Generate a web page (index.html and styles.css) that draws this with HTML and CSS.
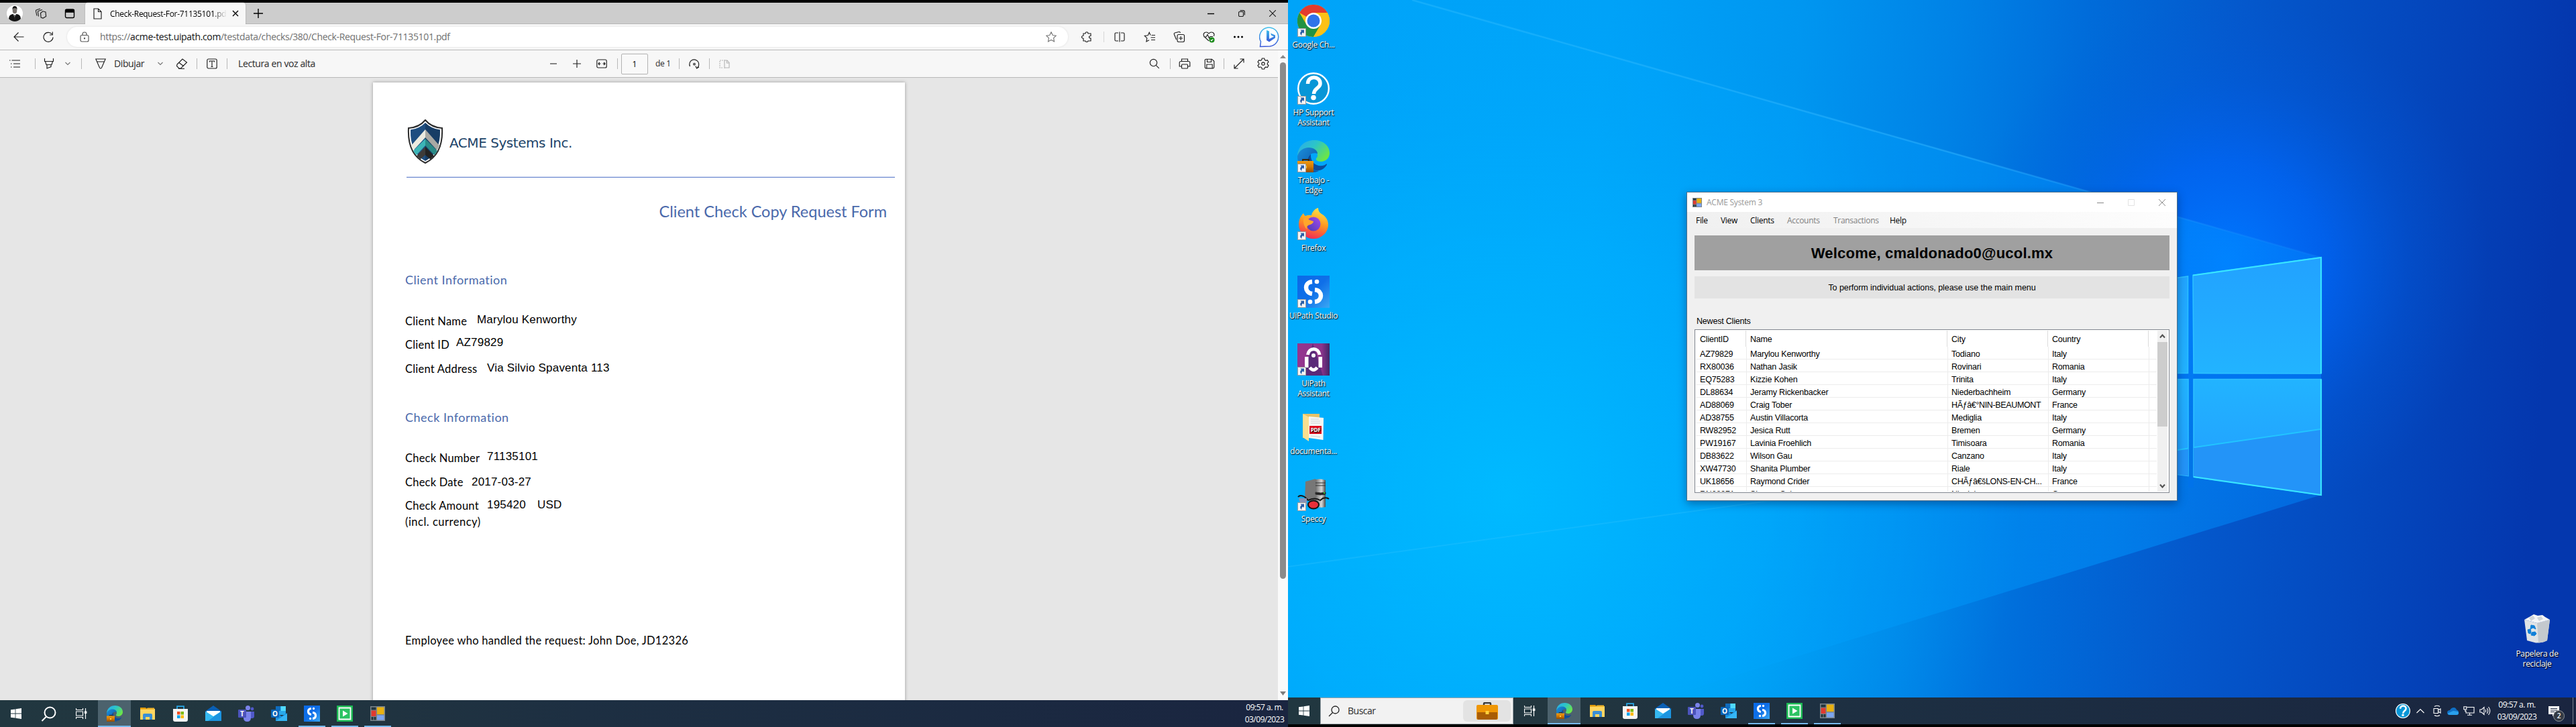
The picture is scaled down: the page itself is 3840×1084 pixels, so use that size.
FILE: index.html
```html
<!DOCTYPE html>
<html lang="es">
<head>
<meta charset="utf-8">
<title>Escritorio</title>
<link rel="stylesheet" href="styles.css">
</head>
<body>
<svg class="defs" aria-hidden="true">
  <defs>
    <linearGradient id="gEdgeTop" x1="0" y1="0" x2="1" y2=".6"><stop offset="0" stop-color="#2aa8f0"/><stop offset=".5" stop-color="#2cc5c8"/><stop offset="1" stop-color="#6be548"/></linearGradient>
    <linearGradient id="gEdgeMid" x1="0" y1="0" x2="1" y2="1"><stop offset="0" stop-color="#1b8fdc"/><stop offset="1" stop-color="#0a4fa0"/></linearGradient>
    <linearGradient id="gCase" x1="0" y1="0" x2="0" y2="1"><stop offset="0" stop-color="#f09a10"/><stop offset=".5" stop-color="#d47a04"/><stop offset="1" stop-color="#8f4a02"/></linearGradient>
    <linearGradient id="gStudio" x1="0" y1="0" x2="1" y2="1"><stop offset="0" stop-color="#0a6ae8"/><stop offset=".5" stop-color="#0f6fe8"/><stop offset="1" stop-color="#3aa8f4"/></linearGradient>
    <linearGradient id="gFox" x1=".6" y1="0" x2=".3" y2="1"><stop offset="0" stop-color="#ffe14a"/><stop offset=".45" stop-color="#ff9a1f"/><stop offset="1" stop-color="#f0245a"/></linearGradient>
    <linearGradient id="gPurple" x1="0" y1="1" x2="1" y2="0"><stop offset="0" stop-color="#4a3ab0"/><stop offset="1" stop-color="#a44af0"/></linearGradient>
    <linearGradient id="gAssist" x1="0" y1="0" x2="1" y2="0"><stop offset="0" stop-color="#95358f"/><stop offset=".75" stop-color="#8c348c"/><stop offset="1" stop-color="#3f2766"/></linearGradient>
    <linearGradient id="gTower" x1="0" y1="0" x2="1" y2="0"><stop offset="0" stop-color="#6d6d6d"/><stop offset=".6" stop-color="#d8d8d8"/><stop offset="1" stop-color="#4a4a4a"/></linearGradient>
    <linearGradient id="gBing" x1="0" y1="0" x2="0" y2="1"><stop offset="0" stop-color="#3fc0ec"/><stop offset="1" stop-color="#3a58d8"/></linearGradient>
    <symbol id="edge" viewBox="0 0 48 48">
      <path d="M0 23C1 9 11 0 25 0c13 0 23 8 23 19 0 8-6 13-13 13-6 0-8-3-7-5 2-2 2-3 2-5 0-5-5-9-12-9C9 13 3 17 0 23z" fill="url(#gEdgeTop)"/>
      <path d="M0 24c2-8 9-13 17-13 7 0 13 4 13 9-8-3-16 3-15 12 1 8 8 14 17 14-3 1-6 2-9 2C10 48 0 38 0 24z" fill="url(#gEdgeMid)"/>
      <path d="M20 21c-8 6-7 20 7 24 3 1 8 0 11-2 3-2 6-6 6-7 0-1-2 0-3 1-10 4-22-2-21-16z" fill="#0d4c9c"/>
      <path d="M8 31v-2h9v2" fill="none" stroke="#38260f" stroke-width="2"/>
      <rect y="31" width="24" height="17" fill="url(#gCase)"/><rect x="10" y="38" width="4" height="4" fill="#ffce3c"/>
    </symbol>
    <symbol id="win" viewBox="0 0 16 16"><path d="M0 2.3 6.6 1.4v6.2H0zM7.4 1.3 16 0v7.6H7.4zM0 8.4h6.6v6.2L0 13.7zM7.4 8.4H16V16l-8.6-1.2z" fill="#fff"/></symbol>
    <symbol id="tasks" viewBox="0 0 17 16"><path d="M.5 0v2.5h10V0M.5 16v-2.5h10V16M.5 5h10v6H.5zM14.500 0v16" fill="none" stroke="#fff" stroke-width="1.2"/><rect x="12.800" y="4.500" width="3.600" height="3.400" fill="#fff"/></symbol>
    <symbol id="folder" viewBox="0 0 24 24"><path d="M1 3h8l2 2H1z" fill="#e09a08"/><path d="M1 5h22v16H1z" fill="#ffd661"/><path d="M1 5h9l2-1.500h10V6H1z" fill="#f0b429"/><path d="M5 21v-7q0-2 2-2h10q2 0 2 2v7h-4v-4H9v4z" fill="#3a8fd6"/></symbol>
    <symbol id="store" viewBox="0 0 24 24"><path d="M7 6V1.200h10V6" fill="none" stroke="#2aa9e8" stroke-width="1.700"/><path d="M1 5h22v16q0 3-3 3H4q-3 0-3-3z" fill="#f5f5f5"/><path d="M7 9h4.500v4.500H7z" fill="#f25022"/><path d="M12.500 9H17v4.500h-4.500z" fill="#7fba00"/><path d="M7 14.500h4.500V19H7z" fill="#00a4ef"/><path d="M12.500 14.500H17V19h-4.500z" fill="#ffb900"/></symbol>
    <symbol id="mail" viewBox="0 0 24 24"><path d="M0 8.500 12 0l12 8.500V10H0z" fill="#0a5fb4"/><path d="M2 8h20v8H2z" fill="#fff"/><path d="M0 8.500 12 16l12-7.500V23H0z" fill="#35b8f1"/><path d="M24 8.500V23H4z" fill="#1c94e0"/></symbol>
    <symbol id="teams" viewBox="0 0 24 24"><circle cx="14.500" cy="3.500" r="3.500" fill="#7b83eb"/><circle cx="21" cy="5" r="2.400" fill="#5059c9"/><path d="M17 9h7v7q0 3-3 3h-4z" fill="#5059c9"/><path d="M9 9h10v9q0 6-5.500 6T8 18z" fill="#7b83eb"/><rect y="6" width="12" height="12" rx="1" fill="#4b53bc"/><text x="6" y="15.500" text-anchor="middle" class="glyph g9">T</text></symbol>
    <symbol id="outlook" viewBox="0 0 24 24"><path d="M7 1h15v13H7z" fill="#28a8ea"/><path d="M7 1h7.500v7H7z" fill="#0f6cbd"/><path d="M14.500 1H22v7h-7.500z" fill="#50d9ff"/><path d="M7 11l9 5 8-5v12H7z" fill="#1a90e0"/><path d="M7 23 24 12v11z" fill="#35b5f5"/><rect y="6" width="12" height="12" rx="1" fill="#0a64b8"/><text x="6" y="15.500" text-anchor="middle" class="glyph g9">O</text></symbol>
    <symbol id="studio" viewBox="0 0 48 48"><path d="M0 0h48v48H0z" fill="url(#gStudio)"/><path d="M22 9C10 10 10 25 22 27M26 21c12 1 12 17 0 18" fill="none" stroke="#fff" stroke-width="6.500"/><circle cx="29" cy="9" r="3.300" fill="#fff"/><circle cx="19" cy="39" r="3.300" fill="#fff"/></symbol>
    <symbol id="player" viewBox="0 0 24 24"><path d="M0 0h24v24H0z" fill="#1db954"/><path d="M3.500 3.500h17v17h-17z" fill="#2cc363" stroke="#fff" stroke-width="1.800"/><path d="M9 7.500v9l7.500-4.500z" fill="#fff"/></symbol>
    <symbol id="forms" viewBox="0 0 22 22"><path d="M0 0h22v22H0z" fill="#7b858c"/><path d="M1.500 1.500h7v4h-7zM1.500 16h3v4.500h-3zM5.500 16h3v4.500h-3z" fill="#22343c"/><path d="M1.500 6.500h7V15h-7z" fill="#e03a30"/><path d="M10 1.500h10.500V12H10z" fill="#e8b010"/><path d="M10 13.500h10.500v7H10z" fill="#7ba4f0"/></symbol>
    <symbol id="help" viewBox="0 0 48 48"><circle cx="24" cy="24" r="22.800" fill="#0896d7" stroke="#fff" stroke-width="2.400"/><path d="M15.500 17c0-13 18.500-12 18.500-.500 0 7-9.500 7-9.500 15.500" fill="none" stroke="#fff" stroke-width="5.500"/><circle cx="24" cy="37.500" r="3.800" fill="#fff"/></symbol>
    <symbol id="shortcut" viewBox="0 0 13 13"><path d="M.5.5h12v12H.5z" fill="#f4f4f4" stroke="#9b9b9b"/><path d="M4.500 2.500h5.500V8L8.300 6.500C6.500 7.500 6 9 6.500 11 3.500 9 3.500 6.500 6 4.300z" fill="#2b5fa8"/></symbol>
    <symbol id="bag" viewBox="0 0 32 26"><path d="M11 5V2.500q0-1.500 1.500-1.500h7q1.500 0 1.500 1.500V5" fill="none" stroke="#3a3a3a" stroke-width="2.500"/><rect y="4" width="32" height="22" rx="2" fill="#ef9706"/><path d="M1 15h30v9q0 2-2 2H3q-2 0-2-2z" fill="#a85d05"/><rect x="13.500" y="13" width="5" height="5" fill="#ffd23c"/></symbol>
  </defs>
</svg>

<div class="screens">
  <section class="monitor left">
    <div class="tabstrip">
      <svg class="avatar" width="24" height="24" viewBox="0 0 24 24"><circle cx="12" cy="12" r="12" fill="#fff"/><path d="M3 20q0-6 6-7h6q6 1 6 7-4 4-9 4t-9-4z" fill="#151515"/><path d="M10 13h4l-2 6z" fill="#fff"/><path d="M11.500 14h1.200l.5 7h-2z" fill="#222"/><ellipse cx="12" cy="8" rx="3.300" ry="4.200" fill="#77716c"/><path d="M8.500 7q-.5-6 3.500-6t3.500 6q-.5-3-3.500-3T8.500 7z" fill="#111"/></svg>
      <svg class="m18 ln" width="18" height="16" viewBox="0 0 18 16"><path d="M3 11.500 1.500 4.500Q1.300 3 2.500 2.700L8 1M5.500 12.500 4.500 6Q4.400 4.600 5.500 4.300L11 2.500M8.500 7.500 12 4.800l4 1.200.6 6.500-4.500 2.500-3-1z"/></svg>
      <svg class="m26 ln bold" width="16" height="16" viewBox="0 0 16 16"><rect x="1.500" y="2" width="13" height="12.500" rx="2"/><path d="M2 3h12v3H2z" fill="#000"/></svg>
      <div class="tab">
        <svg class="ln" width="13" height="17" viewBox="0 0 13 17"><path d="M1 1h6.500L12 5.500V16H1zM7.500 1v4.500H12"/></svg>
        <span class="tabtitle">Check-Request-For-71135101.pdf</span>
        <svg class="ln bold" width="10" height="10" viewBox="0 0 10 10"><path d="m1 1 8 8M9 1 1 9"/></svg>
      </div>
      <svg class="m12 ln bold" width="14" height="14" viewBox="0 0 14 14"><path d="M7 0v14M0 7h14"/></svg>
      <div class="winctl">
        <svg class="ln bold" width="10" height="10" viewBox="0 0 10 10"><path d="M0 5.500h10"/></svg>
        <svg class="ln" width="10" height="10" viewBox="0 0 10 10"><rect x=".5" y="2.500" width="7" height="7" rx="1.500"/><path d="M2.500 .6H7Q9.400.6 9.400 3v4.500"/></svg>
        <svg class="ln" width="10" height="10" viewBox="0 0 10 10"><path d="m0 0 10 10M10 0 0 10"/></svg>
      </div>
    </div>

    <div class="addressrow">
      <svg class="ln" width="16" height="16" viewBox="0 0 16 16"><path d="M15.500 8H1M7.500 1.500 1 8l6.500 6.500"/></svg>
      <svg class="m28 ln" width="16" height="16" viewBox="0 0 16 16"><path d="M15 8.500A7 7 0 1 1 13.500 4M14.300.5V5H10"/></svg>
      <div class="omnibox">
        <svg class="ln dim" width="14" height="16" viewBox="0 0 14 16"><rect x="1" y="5.500" width="12" height="9.500" rx="2"/><path d="M4 5.500V4a3 3 0 0 1 6 0v1.500"/><circle cx="7" cy="10.200" r=".6" fill="#555"/></svg>
        <span class="url">https://<b>acme-test.uipath.com</b>/testdata/checks/380/Check-Request-For-71135101.pdf</span>
        <svg class="push ln dim2" width="16" height="16" viewBox="0 0 16 16"><path d="m8 .8 2.200 4.700 5 .7-3.600 3.500.9 5.200L8 12.400l-4.500 2.500.9-5.200L.8 6.200l5-.7z"/></svg>
      </div>
      <svg class="m20 ln" width="16" height="16" viewBox="0 0 16 16"><path d="M3 3h3q0-2.300 2-2.300T10 3h4v3.500q-2.500 0-2.500 1.700T14 10v4h-4q0 1.500-2 1.500T6 14H3v-3.800q-2.500 0-2.500-2T3 6.200z"/></svg>
      <i class="sep tall m17"></i>
      <svg class="m15 ln" width="16" height="16" viewBox="0 0 16 16"><path d="M6 2H2.500Q1 2 1 3.500v9Q1 14 2.500 14H6M10 2h3.500Q15 2 15 3.500v9q0 1.500-1.500 1.500H10M8 .5v15"/></svg>
      <svg class="m28 ln" width="18" height="16" viewBox="0 0 18 16"><path d="m10 5.500-1.800-4.200L6.200 5.700l-5 .7 3.600 3.500-.9 5L8 12.700M11.500 5.500H17M10.500 9H17M11 12.500h6"/></svg>
      <svg class="m26 ln" width="18" height="16" viewBox="0 0 18 16"><path d="M4.500 12 1.300 4Q.9 2.500 2.300 2l6-1.500Q10 .2 10.500 2"/><rect x="6" y="4.500" width="10.500" height="11" rx="2"/><path d="M11.200 7v6M8.200 10h6"/></svg>
      <svg class="m26 ln" width="18" height="17" viewBox="0 0 18 17"><path d="M9 14 2 7.500Q-.2 3.500 3 1.500 6.500 0 9 3q2.500-3 6-1.500 3.200 2 1.300 5.500M1.500 8H5l2-3.500L9.500 10l1.500-2.500h4"/><circle cx="13.500" cy="12.500" r="4" fill="#1a8a1a" stroke="none"/><path d="m11.800 12.500 1.200 1.300 2.200-2.500" stroke="#fff"/></svg>
      <svg class="m27" width="16" height="4" viewBox="0 0 16 4"><circle cx="2.500" cy="2" r="1.500"/><circle cx="8" cy="2" r="1.500"/><circle cx="13.500" cy="2" r="1.500"/></svg>
      <svg class="m23" width="32" height="32" viewBox="0 0 32 32"><path d="M1.500 30.500 2.500 23A14 14 0 1 1 16 30z" fill="#fff" stroke="url(#gBing)" stroke-width="1.500"/><path d="m11 6 4 1.500V19l7-3.500-4-2-1-3 7 3v4l-9 6-4-2.500z" fill="url(#gBing)"/></svg>
    </div>

    <div class="content">
      <div class="viewer">
        <div class="pdfbar">
          <svg class="ln" width="16" height="14" viewBox="0 0 16 14"><path d="M3.500 2H16M6 7h10M6 12h10M0 2h1.500M2 7h1.500M2 12h1.500"/></svg>
          <i class="sep m22"></i>
          <svg class="m12 ln" width="16" height="16" viewBox="0 0 16 16"><path d="M1.500 0v4.500h13V0M2.500 4.500l1.500 5h8l1.500-5M5 9.500V15l6-2.500v-3"/></svg>
          <svg class="m16 ln dim2" width="8" height="6" viewBox="0 0 8 6"><path d="m.5 1 3.500 3.500L7.500 1"/></svg>
          <i class="sep m16"></i>
          <svg class="m20 ln" width="16" height="16" viewBox="0 0 16 16"><path d="M.8 1h14.400L9.500 14Q8 16 6.500 14zM3 5h10"/></svg>
          <span class="m12 tooltext w45">Dibujar</span>
          <svg class="m20 ln dim2" width="8" height="6" viewBox="0 0 8 6"><path d="m.5 1 3.500 3.500L7.500 1"/></svg>
          <svg class="m19 ln" width="18" height="17" viewBox="0 0 18 17"><path d="m2 9 8-8 6.500 5-9 9H5L1.500 11.500zM5 6.500l6.500 5M4 15.500h9"/></svg>
          <i class="sep m13"></i>
          <svg class="m14 ln" width="16" height="16" viewBox="0 0 16 16"><rect x=".8" y="1" width="14.400" height="14" rx="2"/><path d="M4.500 5.500V4h7v1.500M8 4v8.500M6.500 12.500h3"/></svg>
          <i class="sep m14"></i>
          <span class="m16 tooltext w116">Lectura en voz alta</span>
          <svg class="zoomout ln mid" width="12" height="12" viewBox="0 0 12 12"><path d="M1 6h10" stroke-width="1.600"/></svg>
          <svg class="m23 ln" width="12" height="12" viewBox="0 0 12 12"><path d="M0 6h12M6 0v12"/></svg>
          <svg class="m23 ln" width="16" height="14" viewBox="0 0 16 14"><rect x=".8" y="1" width="14.400" height="12" rx="2"/><path d="M3 7h3.500M9.500 7H13M4.800 5 3 7l1.800 2M11.200 5 13 7l-1.800 2"/></svg>
          <i class="sep m15"></i>
          <span class="pagebox">1</span>
          <span class="m11 tooltext of">de 1</span>
          <i class="sep m12"></i>
          <svg class="m13 ln" width="18" height="17" viewBox="0 0 18 17"><path d="M2.500 12A7 7 0 1 1 13 14.500M16 13l-3.500 2L11 11.500"/><circle cx="9" cy="8.500" r="1.300"/></svg>
          <i class="sep m13"></i>
          <svg class="m14 ln pale" width="16" height="15" viewBox="0 0 16 15"><path d="M8 1v13" /><path d="M6 2H1v11h5" stroke-dasharray="2 1"/><path d="M8 2h4l3 3.500V13H8M11.500 2v4H15"/></svg>
          <div class="pdfright">
            <svg class="ln" width="16" height="16" viewBox="0 0 16 16"><circle cx="6.500" cy="6.500" r="5.200"/><path d="m10.300 10.300 4.500 4.500"/></svg>
            <i class="sep m15"></i>
            <svg class="m12 ln" width="18" height="16" viewBox="0 0 18 16"><path d="M4.500 4.500V1h9v3.500M4.500 12H1.200V6.500q0-2 2-2h11.600q2 0 2 2V12h-3.300"/><rect x="4.500" y="9" width="9" height="6" rx="1"/></svg>
            <svg class="m20 ln" width="16" height="16" viewBox="0 0 16 16"><path d="M1.200 3q0-1.800 1.800-1.800h8.500l3.300 3V13q0 1.800-1.800 1.800H3q-1.800 0-1.800-1.800zM4.500 1.200V5.500h6V1.200M3.800 14.800V9h8.400v5.800"/></svg>
            <i class="sep m13"></i>
            <svg class="m14 ln" width="16" height="16" viewBox="0 0 16 16"><path d="M1 15 15 1M9.500 1H15v5.500M6.500 15H1V9.500"/></svg>
            <svg class="m18 ln gear" width="20" height="18" viewBox="0 0 20 18"><circle cx="10" cy="9" r="2.200"/><path d="m8.300 1 3.400 0 .6 2.300 1.700 1L16.300 3.600 18 6.500 16.300 8.200v1.700L18 11.600l-1.700 2.900-2.300-.6-1.700 1L11.700 17H8.300l-.6-2.200-1.700-1-2.300.7L2 11.600l1.700-1.700V8.200L2 6.500l1.700-2.900 2.300.7 1.700-1z"/></svg>
          </div>
        </div>
        <div class="canvas">
          <article class="sheet">
            <header class="brand">
              <svg width="54" height="66" viewBox="0 0 54 66"><path d="M27 1q9 11 25 12 2 39-25 52Q0 52 2 13 18 12 27 1z" fill="#fff" stroke="#2c2c2c" stroke-width="2"/><path d="M27 5q9 9 22 10.500Q50 50 27 62z" fill="#173d66"/><path d="M27 5Q18 14 5 15.500 4 50 27 62z" fill="#1f4e80"/><path d="m27 15 21 24-3.500 7L27 27z" fill="#a9a9a4"/><path d="M27 15 6 39l3.500 7L27 27z" fill="#ecebe0"/><path d="m27 29 18 18-4.500 6.500L27 39z" fill="#2a8a86"/><path d="M27 29 9 47l4.500 6.500L27 39z" fill="#3cb5b6"/><path d="m27 41 13 13.500-5.500 5L27 53z" fill="#232323"/><path d="M27 41 14 54.500l5.500 5L27 53z" fill="#3d3b39"/></svg>
              <span class="company">ACME Systems Inc.</span>
            </header>
            <hr>
            <h1>Client Check Copy Request Form</h1>
            <h2 class="h-client">Client Information</h2>
            <p class="f f1"><span class="w107">Client Name</span><span class="v up2">Marylou Kenworthy</span></p>
            <p class="f f2"><span class="w76">Client ID</span><span class="v up3">AZ79829</span></p>
            <p class="f f3"><span class="w122">Client Address</span><span class="v up1">Via Silvio Spaventa 113</span></p>
            <h2 class="h-check">Check Information</h2>
            <p class="f f4"><span class="w122">Check Number</span><span class="v up2">71135101</span></p>
            <p class="f f3"><span class="w99">Check Date</span><span class="v">2017-03-27</span></p>
            <p class="f f2"><span class="w123">Check Amount</span><span class="v up1 w74">195420</span><span class="v up1">USD</span></p>
            <p class="f incl">(incl. currency)</p>
            <p class="f employee">Employee who handled the request: John Doe, JD12326</p>
          </article>
        </div>
      </div>
      <div class="scrollbar">
        <svg width="9" height="5" viewBox="0 0 9 5"><path d="M4.500 0 9 5H0z" fill="#8a8a8a"/></svg>
        <i class="thumb"></i>
        <svg class="down" width="9" height="6" viewBox="0 0 9 6"><path d="M0 0h9L4.500 6z" fill="#7d7d7d"/></svg>
      </div>
    </div>

    <footer class="taskbar">
      <span class="tb start"><svg width="16" height="16"><use href="#win"/></svg></span>
      <span class="tb"><svg class="find" width="23" height="23" viewBox="0 0 23 23"><circle cx="13.500" cy="9.500" r="8"/><path d="M8 15.500 1.500 22"/></svg></span>
      <span class="tb"><svg width="17" height="16"><use href="#tasks"/></svg></span>
      <span class="tb active"><svg width="24" height="24"><use href="#edge"/></svg></span>
      <span class="tb"><svg width="24" height="24"><use href="#folder"/></svg></span>
      <span class="tb"><svg width="24" height="24"><use href="#store"/></svg></span>
      <span class="tb"><svg width="24" height="24"><use href="#mail"/></svg></span>
      <span class="tb"><svg width="24" height="24"><use href="#teams"/></svg></span>
      <span class="tb"><svg width="24" height="24"><use href="#outlook"/></svg></span>
      <span class="tb open"><svg width="24" height="24"><use href="#studio"/></svg></span>
      <span class="tb open"><svg width="24" height="24"><use href="#player"/></svg></span>
      <span class="tb open"><svg width="22" height="22"><use href="#forms"/></svg></span>
      <div class="clock push"><span>09:57 a. m.</span><span>03/09/2023</span></div>
    </footer>
  </section>

  <section class="monitor right">
    <svg class="wallpaper" width="1920" height="1040" viewBox="0 0 1920 1040">
      <defs>
        <linearGradient id="base" x1="0" y1="0" x2="1" y2=".05"><stop offset="0" stop-color="#00a3f9"/><stop offset=".25" stop-color="#00a2f8"/><stop offset=".4" stop-color="#0096f0"/><stop offset=".52" stop-color="#0082e6"/><stop offset=".62" stop-color="#006cda"/><stop offset=".74" stop-color="#0458cc"/><stop offset=".87" stop-color="#0448be"/><stop offset="1" stop-color="#0437ae"/></linearGradient>
        <radialGradient id="warm" gradientUnits="userSpaceOnUse" cx="330" cy="740" r="760"><stop offset="0" stop-color="#00bcff"/><stop offset=".5" stop-color="#00b3ff" stop-opacity=".6"/><stop offset="1" stop-color="#00a4f8" stop-opacity="0"/></radialGradient>
        <radialGradient id="glow" gradientUnits="userSpaceOnUse" cx="1400" cy="390" r="390"><stop offset="0" stop-color="#0078ff"/><stop offset=".38" stop-color="#0068fb" stop-opacity=".7"/><stop offset=".7" stop-color="#0060ea" stop-opacity=".25"/><stop offset="1" stop-color="#0058dc" stop-opacity="0"/></radialGradient>
        <linearGradient id="cone" x1="0" y1="0" x2="1" y2="0"><stop offset="0" stop-color="#00b4ff" stop-opacity=".05"/><stop offset=".5" stop-color="#00a4ff" stop-opacity=".3"/><stop offset=".8" stop-color="#0098ff" stop-opacity=".5"/><stop offset="1" stop-color="#0088ff" stop-opacity=".45"/></linearGradient>
        <linearGradient id="pane" x1="0" y1="0" x2="0" y2="1"><stop offset="0" stop-color="#22a2ff"/><stop offset=".5" stop-color="#22b4ff"/><stop offset="1" stop-color="#229cff"/></linearGradient>
        <linearGradient id="beam" x1="0" y1="0" x2="1" y2="0"><stop offset="0" stop-color="#40c4ff" stop-opacity=".3"/><stop offset=".6" stop-color="#30b4ff" stop-opacity=".5"/><stop offset="1" stop-color="#2090ff" stop-opacity=".15"/></linearGradient>
      </defs>
      <path d="M0 0h1920v1040H0z" fill="url(#base)"/>
      <path d="M0 0h1920v1040H0z" fill="url(#warm)"/>
      <path d="M0 0h1920v1040H0z" fill="url(#glow)"/>
      <path d="M185 0 1540 384V738L560 1040H0V0z" fill="url(#cone)"/>
      <path d="M185 0 1540 384" stroke="url(#beam)" stroke-width="2.500"/>
      <path d="M0 845 730 745" stroke="#3cc8ff" stroke-opacity=".25" stroke-width="2"/>
      <path d="M1170 423 1342 411v316h8V411l190-27v354l-190-27h-8l-172-20z" fill="#0072ee" fill-opacity=".5"/>
      <g stroke="#2cc0ff" stroke-width="1.600" fill="url(#pane)">
        <path d="M1170 436 1341.500 412v144.500H1170zM1170 565.500h172V709.500L1170 687zM1349 410.500 1540 384v173l-190-.5zM1350 565.500h190V738l-190-27z"/>
      </g>
      <path d="M1350 668 1540 640V738l-190-27zM1326 671l16-2.500v41l-16-2z" fill="#2394f8"/>
      <path d="m1351 667 188-27M1326 671l16-2.500" stroke="#22c4ff" stroke-width="2"/>
      <path d="M1349 410.500 1540 384v173M1540 565.500V738l-190-27" fill="none" stroke="#38e4ff" stroke-width="2.200"/>
    </svg>

    <div class="desktop">
      <nav class="shortcuts">
        <div class="icon"><div class="pic"><svg width="48" height="48" viewBox="0 0 48 48"><circle cx="24" cy="24" r="24" fill="#fbc116"/><path d="M3.200 12A24 24 0 0 0 24 48L34.500 30 24 24 13.600 30z" fill="#229342"/><path d="M24 12h20.800A24 24 0 0 1 24 48l10.500-18z" fill="#fbc116"/><path d="M3.200 12A24 24 0 0 1 44.800 12H24L13.600 18z" fill="#e33b2e"/><circle cx="24" cy="24" r="12" fill="#fff"/><circle cx="24" cy="24" r="9.500" fill="#2f73e8"/></svg><svg class="cut" width="13" height="13"><use href="#shortcut"/></svg></div><span>Google Ch...</span></div>
        <div class="icon"><div class="pic"><svg width="48" height="48"><use href="#help"/></svg><svg class="cut" width="13" height="13"><use href="#shortcut"/></svg></div><span>HP Support<br>Assistant</span></div>
        <div class="icon"><div class="pic"><svg width="48" height="48"><use href="#edge"/></svg><svg class="cut" width="13" height="13"><use href="#shortcut"/></svg></div><span>Trabajo -<br>Edge</span></div>
        <div class="icon"><div class="pic"><svg width="48" height="48" viewBox="0 0 48 48"><path d="M9 8q1 3 3 4 4-2 9-1C22 5 27 1 31 0q0 6 5 9c7 4 10 10 10 16a22 21 0 0 1-44 0C2 17 5 12 9 8z" fill="url(#gFox)"/><circle cx="24" cy="24" r="10.500" fill="url(#gPurple)"/><path d="M9 16q5-3 9 2l6 2q0 3-5 5-6 1-5 7-6-6-5-16z" fill="#ffa62b"/></svg><svg class="cut" width="13" height="13"><use href="#shortcut"/></svg></div><span>Firefox</span></div>
        <div class="icon"><div class="pic"><svg width="48" height="48"><use href="#studio"/></svg><svg class="cut" width="13" height="13"><use href="#shortcut"/></svg></div><span>UiPath Studio</span></div>
        <div class="icon"><div class="pic"><svg width="48" height="48" viewBox="0 0 48 48"><path d="M0 0h48v48H0z" fill="url(#gAssist)"/><path d="M23 0 38 48H8z" fill="#5a2a78"/><path d="M15.500 17C17 5.500 31.500 5.500 33 17" fill="none" stroke="#fff" stroke-width="5"/><path d="M11 20h5.500v16H11zM31.500 20H37v16h-5.500z" fill="#fff"/><path d="M18.500 36q5.500 7 11 0" fill="none" stroke="#fff" stroke-width="5"/><circle cx="24" cy="18" r="3" fill="#fff"/></svg><svg class="cut" width="13" height="13"><use href="#shortcut"/></svg></div><span>UiPath<br>Assistant</span></div>
        <div class="icon"><div class="pic"><svg width="48" height="48" viewBox="0 0 48 48"><path d="M8 4h25v36H8z" fill="#e8c268"/><path d="m17 8 22 2-.5 33L17 40z" fill="#f6f6f4"/><path d="M20 12h12M20 15h14M20 18h14M20 37l14 1.500" stroke="#cfd4d8"/><path d="M18 22h18v12H18z" fill="#e0091c"/><text x="27" y="31" text-anchor="middle" class="glyph g7">PDF</text><path d="m8 4 9 5v36l-9-6z" fill="#fbdf90"/></svg></div><span>documenta...</span></div>
        <div class="icon"><div class="pic"><svg width="48" height="48" viewBox="0 0 48 48"><path d="m12 4 15-4v34l-16-2z" fill="#777"/><path d="M27 1q8-2 15 1v40q-8 2-15-1z" fill="url(#gTower)"/><path d="M27 6h15M27 10h15M27 20q8 2 15 0v3q-8 2-15 0z" stroke="#333" fill="#222"/><circle cx="40" cy="21" r="1" fill="#3f3"/><path d="M1 27q3-4 10 0l5 5M16 32q10-5 18 0l4-3q6-2 9 1" fill="none" stroke="#151515" stroke-width="2"/><ellipse cx="24" cy="38.500" rx="8" ry="6" fill="#e8303a" stroke="#151515" stroke-width="2"/><path d="M2 29h12v10H5z" fill="#8a94b8"/></svg><svg class="cut" width="13" height="13"><use href="#shortcut"/></svg></div><span>Speccy</span></div>
      </nav>

      <div class="icon bin"><div class="pic"><svg width="48" height="48" viewBox="0 0 48 48"><path d="m5 9 19 5 19-5-4 31q-8 4-17 3.500L9 40z" fill="#dfe3e6"/><path d="m24 14 19-5-4 31q-5 3-13 3.500z" fill="#c4c9ce"/><path d="m5 9 9-5 5-3 6 2 7-1 4 3 7 4-19 5z" fill="#f3f5f6"/><path d="m12 6 6-3 3 4-6 4zM24 6l6-2 3 4-6 3z" fill="#cfd4d8"/><path d="m15 17 5 1 2 5-4-2-4 2zM10 24l4-1 1 4-1 3-3-1zM16 28l5-1 2 3-3 3-5-1z" fill="#1180d8" stroke="#1180d8"/></svg></div><span>Papelera de<br>reciclaje</span></div>

      <div class="window">
        <div class="titlebar">
          <svg width="14" height="14"><use href="#forms"/></svg>
          <span>ACME System 3</span>
          <svg class="push" width="10" height="10" viewBox="0 0 10 10"><path d="M0 5.500h10" stroke="#888"/></svg>
          <svg width="10" height="10" viewBox="0 0 10 10"><path d="M.5.5h9v9h-9z" fill="none" stroke="#e2e2e2"/></svg>
          <svg width="10" height="10" viewBox="0 0 10 10"><path d="m0 0 10 10M10 0 0 10" stroke="#8a8a8a"/></svg>
        </div>
        <div class="menubar"><span class="mi1">File</span><span class="mi2">View</span><span class="mi3">Clients</span><span class="mi4 off">Accounts</span><span class="mi5 off">Transactions</span><span>Help</span></div>
        <div class="body">
          <div class="welcome">Welcome, cmaldonado0@ucol.mx</div>
          <div class="hint">To perform individual actions, please use the main menu</div>
          <div class="caption">Newest Clients</div>
          <div class="list">
            <div class="rows">
              <div class="r head"><span>ClientID</span><span>Name</span><span>City</span><span>Country</span></div>
              <div class="r"><span>AZ79829</span><span>Marylou Kenworthy</span><span>Todiano</span><span>Italy</span></div>
              <div class="r"><span>RX80036</span><span>Nathan Jasik</span><span>Rovinari</span><span>Romania</span></div>
              <div class="r"><span>EQ75283</span><span>Kizzie Kohen</span><span>Trinita</span><span>Italy</span></div>
              <div class="r"><span>DL88634</span><span>Jeramy Rickenbacker</span><span>Niederbachheim</span><span>Germany</span></div>
              <div class="r"><span>AD88069</span><span>Craig Tober</span><span class="tight">HÃƒâ€°NIN-BEAUMONT</span><span>France</span></div>
              <div class="r"><span>AD38755</span><span>Austin Villacorta</span><span>Mediglia</span><span>Italy</span></div>
              <div class="r"><span>RW82952</span><span>Jesica Rutt</span><span>Bremen</span><span>Germany</span></div>
              <div class="r"><span>PW19167</span><span>Lavinia Froehlich</span><span>Timisoara</span><span>Romania</span></div>
              <div class="r"><span>DB83622</span><span>Wilson Gau</span><span>Canzano</span><span>Italy</span></div>
              <div class="r"><span>XW47730</span><span>Shanita Plumber</span><span>Riale</span><span>Italy</span></div>
              <div class="r"><span>UK18656</span><span>Raymond Crider</span><span class="tight">CHÃƒâ€šLONS-EN-CH...</span><span>France</span></div>
              <div class="r"><span>RN28371</span><span>Simona Sala</span><span>Nicolai</span><span>Germany</span></div>
            </div>
            <div class="listbar">
              <svg width="9" height="7" viewBox="0 0 9 7"><path d="m1 5.500 3.500-4 3.500 4" fill="none" stroke="#505050" stroke-width="2"/></svg>
              <i></i>
              <svg class="down" width="9" height="7" viewBox="0 0 9 7"><path d="m1 1.500 3.500 4 3.500-4" fill="none" stroke="#505050" stroke-width="2"/></svg>
            </div>
          </div>
        </div>
      </div>
    </div>

    <footer class="taskbar">
      <span class="tb rstart"><svg width="16" height="16"><use href="#win"/></svg></span>
      <div class="search">
        <svg width="17" height="17" viewBox="0 0 17 17"><g fill="none" stroke="#222" stroke-width="1.300"><circle cx="10.500" cy="6.500" r="5.500"/><path d="M6.500 10.500 1 16"/></g></svg>
        <span>Buscar</span>
        <div class="bagbox"><svg width="32" height="26"><use href="#bag"/></svg></div>
      </div>
      <span class="tb rtasks"><svg width="17" height="16"><use href="#tasks"/></svg></span>
      <span class="tb active"><svg width="24" height="24"><use href="#edge"/></svg></span>
      <span class="tb"><svg width="24" height="24"><use href="#folder"/></svg></span>
      <span class="tb"><svg width="24" height="24"><use href="#store"/></svg></span>
      <span class="tb"><svg width="24" height="24"><use href="#mail"/></svg></span>
      <span class="tb"><svg width="24" height="24"><use href="#teams"/></svg></span>
      <span class="tb"><svg width="24" height="24"><use href="#outlook"/></svg></span>
      <span class="tb open"><svg width="24" height="24"><use href="#studio"/></svg></span>
      <span class="tb open"><svg width="24" height="24"><use href="#player"/></svg></span>
      <span class="tb open"><svg width="22" height="22"><use href="#forms"/></svg></span>
      <div class="tray push">
        <svg width="22" height="22"><use href="#help"/></svg>
        <svg class="wl m9" width="12" height="8" viewBox="0 0 12 8"><path d="m.5 7 5.500-5.500L11.500 7"/></svg>
        <svg class="wl m12" width="14" height="18" viewBox="0 0 14 18"><path d="M3 2.500q4-2.500 8 0M3 15.500q4 2.500 8 0M2 5.500h6.500v7H2zM8.500 8l3.500-2v6L8.500 10"/></svg>
        <svg class="m8" width="17" height="11" viewBox="0 0 17 11"><path d="M4 11Q0 11 0 7.500T4 4q2-4 6-4 3 0 4 3.500 3 .5 3 4T13.500 11z" fill="#0f6fc4"/><path d="M4 11Q1 11 1 8.500L9 5l7 1q1 1 1 2 0 3-3.500 3z" fill="#2aa0ec"/></svg>
        <svg class="wl m7" width="17" height="14" viewBox="0 0 17 14"><path d="M5.500 1.500H16v8.500H4V6.500M9.500 10v3M6 13.200h7M.8.800h4v4h-4zM2.800 4.800V8"/></svg>
        <svg class="wl m7" width="17" height="14" viewBox="0 0 17 14"><path d="M.8 5h2.500L7 1.500v11L3.300 9H.8zM9 5q1.500 2 0 4M11.300 3q3 4 0 8M13.500 1q4.500 6 0 12"/></svg>
        <div class="clock m8"><span>09:57 a. m.</span><span>03/09/2023</span></div>
        <div class="notif"><svg width="16" height="15" viewBox="0 0 16 15"><path d="M0 0h16v12H9l-3 3v-3H0z" fill="#fff"/><path d="M3 3.500h10M3 6h10M3 8.500h6" stroke="#1b2740"/></svg><b>2</b></div>
      </div>
      <i class="peek"></i>
    </footer>
  </section>
</div>
</body>
</html>
```
FILE: styles.css
```css
* { box-sizing: border-box; }
body { margin: 0; background: #000; font: 12px/15px "Open Sans", "Noto Sans", sans-serif; color: #000; }
svg { display: block; flex: none; }
p, h1, h2 { margin: 0; font-weight: 400; }
.defs { position: absolute; width: 0; height: 0; }
.screens { display: flex; width: 3840px; height: 1084px; overflow: hidden; }
.monitor { width: 1920px; height: 1084px; display: flex; flex-direction: column; }
.left { padding-top: 4px; }
.right { position: relative; padding-bottom: 4px; }
.push { margin-left: auto; }

/* spacing steps used along the toolbars */
.m7 { margin-left: 7px; } .m8 { margin-left: 8px; } .m9 { margin-left: 9px; } .m10 { margin-left: 10px; }
.m11 { margin-left: 11px; } .m12 { margin-left: 12px; } .m13 { margin-left: 13px; } .m14 { margin-left: 14px; }
.m15 { margin-left: 15px; } .m16 { margin-left: 16px; } .m17 { margin-left: 17px; } .m18 { margin-left: 18px; }
.m19 { margin-left: 19px; } .m20 { margin-left: 20px; } .m22 { margin-left: 22px; } .m23 { margin-left: 23px; }
.m26 { margin-left: 26px; } .m27 { margin-left: 27px; } .m28 { margin-left: 28px; }

.ln { fill: none; stroke: #1f1f1f; stroke-width: 1.15; }
.bold { stroke: #000; stroke-width: 1.4; }
.dim { stroke: #555; }
.dim2 { stroke: #777; }
.mid { stroke: #666; }
.pale { stroke: #b5b5b5; }
.wl { fill: none; stroke: #fff; stroke-width: 1.1; }
.glyph { fill: #fff; font-family: "Open Sans", sans-serif; font-weight: 700; }
.g9 { font-size: 10px; }
.g7 { font-size: 8px; }

/* browser */
.tabstrip { height: 32px; flex: none; background: #cdcdcd; border-bottom: 1px solid #b4b4b4; display: flex; align-items: center; padding: 0 18px 0 10px; }
.tab { width: 239px; height: 32px; margin-left: 15px; padding: 0 10px 0 12px; background: #f7f7f7; border-radius: 4px 4px 0 0; box-shadow: 0 0 2px #999; display: flex; align-items: center; align-self: flex-start; clip-path: inset(-2px -3px 0 -3px); }
.tabtitle { width: 174px; margin: 0 8px 0 12px; overflow: hidden; white-space: nowrap; letter-spacing: -.3px; -webkit-mask-image: linear-gradient(90deg, #000 88%, transparent); mask-image: linear-gradient(90deg, #000 88%, transparent); }
.winctl { margin-left: auto; display: flex; gap: 36px; }
.addressrow { height: 39px; flex: none; background: #f7f7f7; border-bottom: 1px solid #b9b9b9; display: flex; align-items: center; padding-left: 20px; }
.omnibox { width: 1492px; height: 30px; margin-left: 20px; padding: 0 17px 0 19px; border-radius: 15px; background: #fff; box-shadow: 0 0 3px #ddd; display: flex; align-items: center; }
.url { margin-left: 16px; font-size: 14px; line-height: 20px; letter-spacing: -.34px; color: #6f6f6f; white-space: nowrap; }
.url b { font-weight: 400; color: #111; }
.content { flex: 1; min-height: 0; display: flex; }
.viewer { width: 1905px; display: flex; flex-direction: column; }
.pdfbar { height: 41px; flex: none; background: #f7f7f7; border-bottom: 1px solid #b9b9b9; display: flex; align-items: center; padding: 0 12px 0 14px; }
.pdfright { margin-left: auto; display: flex; align-items: center; }
.sep { width: 1px; height: 16px; background: #b8b8b8; flex: none; }
.sep.tall { background: #d6d6d6; }
.tooltext { font-size: 14px; line-height: 20px; letter-spacing: -.39px; white-space: nowrap; color: #2a2a2a; }
.w45 { width: 45px; } .w116 { width: 116px; }
.of { width: 23px; font-size: 12px; letter-spacing: -.3px; }
.zoomout { margin-left: 348px; }
.pagebox { width: 40px; height: 31px; margin-left: 5px; border: 1px solid #b3b3b3; border-radius: 2px; background: #f9f9f9; font-size: 12px; line-height: 30px; text-align: center; }
.canvas { flex: 1; min-height: 0; background: #e6e6e6; overflow: hidden; }
.sheet { width: 793px; height: 1000px; margin: 7px auto 0; padding: 55px 15px 0 48px; background: #fff; box-shadow: 0 0 5px #9a9a9a; font: 16.5px/24px Lato, sans-serif; letter-spacing: .22px; }
.brand { display: flex; align-items: center; height: 66px; padding-left: 3px; }
.company { margin: 3px 0 0 9px; font: 20px/24px "DejaVu Sans", sans-serif; letter-spacing: -.46px; color: #1d4469; }
.sheet hr { height: 2px; margin: 19px 0 0 2px; border: 0; border-top: 1px solid #d3dcf2; background: #6e8ad0; }
.sheet h1 { margin: 35px 12px 0 0; font-size: 23.5px; line-height: 30px; letter-spacing: 0; text-align: right; color: #4a69ab; }
.sheet h2 { font-size: 18px; line-height: 24px; letter-spacing: .5px; color: #4a69ab; }
.sheet .h-client { margin-top: 75px; }
.sheet .h-check { margin-top: 48px; }
.f { display: flex; align-items: center; height: 24px; white-space: nowrap; }
.f1 { margin-top: 38px; } .f2 { margin-top: 11px; } .f3 { margin-top: 12px; } .f4 { margin-top: 37px; }
.employee { margin-top: 153px; letter-spacing: .3px; }
.incl { letter-spacing: .5px; }
.v { font: 17px/20px "Liberation Sans", sans-serif; letter-spacing: .2px; }
.up1 { padding-bottom: 2px; } .up2 { padding-bottom: 4px; } .up3 { padding-bottom: 6px; }
.w107 { width: 107px; } .w76 { width: 76px; } .w122 { width: 122px; } .w99 { width: 99px; } .w123 { width: 122px; } .w74 { width: 75px; }
.scrollbar { width: 15px; background: #fafafa; display: flex; flex-direction: column; align-items: center; padding-top: 7px; }
.scrollbar .thumb { width: 9px; height: 770px; margin-top: 6px; border-radius: 4.5px; background: #8b8b8b; }
.scrollbar .down { margin: auto 0 7px; }

/* taskbars */
.taskbar { height: 40px; flex: none; position: relative; display: flex; background: linear-gradient(90deg, #213740, #22363f 20%, #1d2f42 45%, #1b2a41 75%, #1a2540); }
.tb { width: 49px; height: 40px; display: flex; align-items: center; justify-content: center; flex: none; }
.tb.start { width: 48px; }
.tb.active { background: linear-gradient(#76b9ed, #76b9ed) bottom / 100% 2px no-repeat #4c626d; }
.tb.open { background: linear-gradient(#76b9ed, #76b9ed) bottom / 40px 2px no-repeat; }
.find { fill: none; stroke: #fff; stroke-width: 2; }
.clock { width: 62px; display: flex; flex-direction: column; align-items: center; gap: 3px; padding-top: 3px; color: #fff; letter-spacing: -.5px; white-space: nowrap; }
.left .clock { margin-right: 4px; }
.rstart { width: 48px; }
.search { width: 288px; height: 40px; background: #f2f2f2; border: 1px solid #9aa3a8; display: flex; align-items: center; padding: 0 3px 0 11px; }
.search span { margin-left: 12px; font-size: 14px; line-height: 20px; letter-spacing: -.5px; color: #2b2b2b; }
.bagbox { width: 71px; height: 32px; margin-left: auto; border-radius: 6px; background: #e3e3e3; display: flex; align-items: center; justify-content: center; }
.rtasks { width: 51px; padding-right: 3px; }
.tray { display: flex; align-items: center; }
.tray .clock { align-self: flex-start; }
.notif { position: relative; margin-left: 16px; width: 24px; }
.notif b { position: absolute; left: 7px; top: 6px; width: 17px; height: 17px; border-radius: 50%; border: 1px solid #8d949c; background: #333a44; color: #fff; font-size: 10px; font-weight: 600; line-height: 15px; text-align: center; }
.peek { width: 1px; margin: 0 4px 0 12px; background: #77808e; }

/* desktop */
.wallpaper { position: absolute; left: 0; top: 0; }
.desktop { position: relative; height: 1040px; flex: none; }
.shortcuts { width: 76px; padding-top: 7px; display: grid; grid-auto-rows: 101px; }
.icon { width: 76px; display: flex; flex-direction: column; align-items: center; color: #fff; text-align: center; text-shadow: 1px 1px 1px rgba(0,0,0,.85), 0 1px 2px rgba(0,0,0,.6); letter-spacing: -.3px; white-space: nowrap; }
.icon span { margin-top: 4px; }
.pic { position: relative; }
.cut { position: absolute; left: 0; bottom: 0; }
.bin { position: absolute; left: 1824px; top: 915px; }

/* client window */
.window { position: absolute; left: 594px; top: 286px; width: 732px; height: 461px; background: #f0f0f0; outline: 1px solid #4a6f8c; outline-offset: -1px; box-shadow: 0 4px 12px rgba(0,30,80,.45); display: flex; flex-direction: column; padding: 1px; }
.titlebar { height: 29px; display: flex; align-items: center; background: #fff; padding: 0 17px 0 8px; color: #999; letter-spacing: -.24px; }
.titlebar span { margin-left: 7px; }
.titlebar svg + svg { margin-left: 36px; }
.menubar { height: 24px; display: flex; align-items: center; padding-left: 13px; background: linear-gradient(90deg, #f0f0f0, #fdfdfd); letter-spacing: -.3px; }
.mi1 { width: 37px; } .mi2 { width: 44px; } .mi3 { width: 55px; } .mi4 { width: 69px; } .mi5 { width: 84px; }
.off { color: #808080; }
.body { flex: 1; padding: 11px; font: 12.5px/15px "Liberation Sans", sans-serif; letter-spacing: -.2px; }
.welcome { height: 52px; background: #a0a0a0; font-size: 22px; font-weight: 700; line-height: 53px; letter-spacing: .2px; text-align: center; }
.hint { height: 33px; margin-top: 9px; background: #e3e3e3; line-height: 35px; letter-spacing: -.05px; text-align: center; }
.caption { margin: 27px 0 4px 3px; }
.list { height: 244px; border: 1px solid #828790; background: #fff; display: flex; padding: 1px 2px 1px 1px; overflow: hidden; }
.rows { width: 687px; overflow: hidden; }
.r { height: 19px; display: grid; grid-template-columns: 76px 300px 150px 150px; border-bottom: 1px solid #ececec; line-height: 14px; white-space: nowrap; }
.r span { border-right: 1px solid #ececec; padding: 4px 0 0 5px; overflow: hidden; }
.r span:first-child { padding-left: 6px; }
.r.head { height: 24px; grid-template-columns: 75px 300px 150px 150px; border: 0; line-height: 18px; }
.r.head span { border-color: #dcdcdc; }
.r.head span + span { padding-left: 6px; }
.r .tight { letter-spacing: -.36px; }
.listbar { width: 15px; margin-left: auto; background: #f0f0f0; display: flex; flex-direction: column; align-items: center; padding: 5px 0; }
.listbar i { width: 15px; height: 126px; margin-top: 5px; background: #cdcdcd; }
.listbar .down { margin-top: auto; }
```
